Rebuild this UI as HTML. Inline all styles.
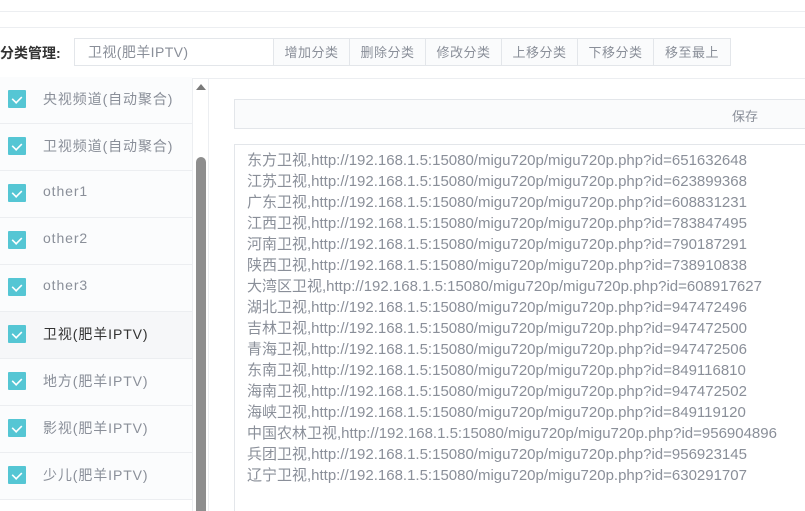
<!DOCTYPE html>
<html style="overflow:hidden"><head><meta charset="utf-8"><style>
html,body{margin:0;width:805px;height:511px;overflow:hidden}
body{background:#fff;font-family:"Liberation Sans","Noto Sans CJK SC",sans-serif;position:relative}
.a{position:absolute}
.hl{position:absolute;left:0;width:805px;height:1px;background:#eceef1}
.btn{position:absolute;top:38px;height:28px;border:1px solid #e3e6ea;background:#fafbfc;color:#8a8f99;font-size:13px;line-height:28px;text-align:center;box-sizing:border-box;letter-spacing:.5px}
.row{position:absolute;left:0;width:192px;height:46px;border-bottom:1px solid #eceef1;background:#fbfcfd}
.row .cb{position:absolute;left:8px;top:13px;width:18px;height:18px;background:#55c6d4;border-radius:1px}
.row .cb:after{content:"";position:absolute;left:5px;top:3px;width:6px;height:9px;border:solid #fff;border-width:0 2px 2px 0;transform:rotate(45deg) scale(.8)}
.row span{position:absolute;left:43px;top:12px;font-size:14px;color:#8a8f99;letter-spacing:.9px}
.ta{position:absolute;left:234px;top:144px;width:580px;height:367px;border:1px solid #e3e6ea;border-bottom:none;box-sizing:border-box;padding:5px 0 0 12px;font-size:15px;line-height:21px;color:#8a8f99;white-space:pre;overflow:hidden}
</style></head><body>
<div class="hl" style="top:11px"></div>
<div class="hl" style="top:27px"></div>
<div class="a" style="left:0;top:43px;font-size:14px;color:#333;font-weight:bold">分类管理:</div>
<div class="a" style="left:74px;top:38px;width:200px;height:28px;border:1px solid #e3e6ea;box-sizing:border-box;font-size:14px;color:#8a8f99;line-height:27px;padding-left:13px;letter-spacing:.4px">卫视(肥羊IPTV)</div>
<div class="btn" style="left:273px;width:77px">增加分类</div>
<div class="btn" style="left:349px;width:77px">删除分类</div>
<div class="btn" style="left:425px;width:77px">修改分类</div>
<div class="btn" style="left:501px;width:77px">上移分类</div>
<div class="btn" style="left:577px;width:77px">下移分类</div>
<div class="btn" style="left:653px;width:78px">移至最上</div>
<div class="hl" style="top:78px"></div>
<div class="row" style="top:77px"><div class="cb"></div><span>央视频道(自动聚合)</span></div>
<div class="row" style="top:124px"><div class="cb"></div><span>卫视频道(自动聚合)</span></div>
<div class="row" style="top:171px"><div class="cb"></div><span>other1</span></div>
<div class="row" style="top:218px"><div class="cb"></div><span>other2</span></div>
<div class="row" style="top:265px"><div class="cb"></div><span>other3</span></div>
<div class="row" style="top:312px;background:#f6f7f9"><div class="cb"></div><span style="color:#333">卫视(肥羊IPTV)</span></div>
<div class="row" style="top:359px"><div class="cb"></div><span>地方(肥羊IPTV)</span></div>
<div class="row" style="top:406px"><div class="cb"></div><span>影视(肥羊IPTV)</span></div>
<div class="row" style="top:453px"><div class="cb"></div><span>少儿(肥羊IPTV)</span></div>
<div class="a" style="left:192px;top:79px;width:1px;height:432px;background:#eceef1"></div>
<div class="a" style="left:208px;top:79px;width:1px;height:432px;background:#eceef1"></div>
<div class="a" style="left:196px;top:84px;width:0;height:0;border-left:5px solid transparent;border-right:5px solid transparent;border-bottom:6px solid #7a7a7a"></div>
<div class="a" style="left:196px;top:157px;width:10px;height:360px;background:#8e8e8e;border-radius:5px"></div>
<div class="a" style="left:234px;top:99px;width:580px;height:30px;border:1px solid #e3e6ea;box-sizing:border-box;background:#fafbfc"></div>
<div class="a" style="left:732px;top:106px;font-size:13px;color:#8a8f99">保存</div>
<div class="ta">东方卫视,http://192.168.1.5:15080/migu720p/migu720p.php?id=651632648
江苏卫视,http://192.168.1.5:15080/migu720p/migu720p.php?id=623899368
广东卫视,http://192.168.1.5:15080/migu720p/migu720p.php?id=608831231
江西卫视,http://192.168.1.5:15080/migu720p/migu720p.php?id=783847495
河南卫视,http://192.168.1.5:15080/migu720p/migu720p.php?id=790187291
陕西卫视,http://192.168.1.5:15080/migu720p/migu720p.php?id=738910838
大湾区卫视,http://192.168.1.5:15080/migu720p/migu720p.php?id=608917627
湖北卫视,http://192.168.1.5:15080/migu720p/migu720p.php?id=947472496
吉林卫视,http://192.168.1.5:15080/migu720p/migu720p.php?id=947472500
青海卫视,http://192.168.1.5:15080/migu720p/migu720p.php?id=947472506
东南卫视,http://192.168.1.5:15080/migu720p/migu720p.php?id=849116810
海南卫视,http://192.168.1.5:15080/migu720p/migu720p.php?id=947472502
海峡卫视,http://192.168.1.5:15080/migu720p/migu720p.php?id=849119120
中国农林卫视,http://192.168.1.5:15080/migu720p/migu720p.php?id=956904896
兵团卫视,http://192.168.1.5:15080/migu720p/migu720p.php?id=956923145
辽宁卫视,http://192.168.1.5:15080/migu720p/migu720p.php?id=630291707</div>
</body></html>
